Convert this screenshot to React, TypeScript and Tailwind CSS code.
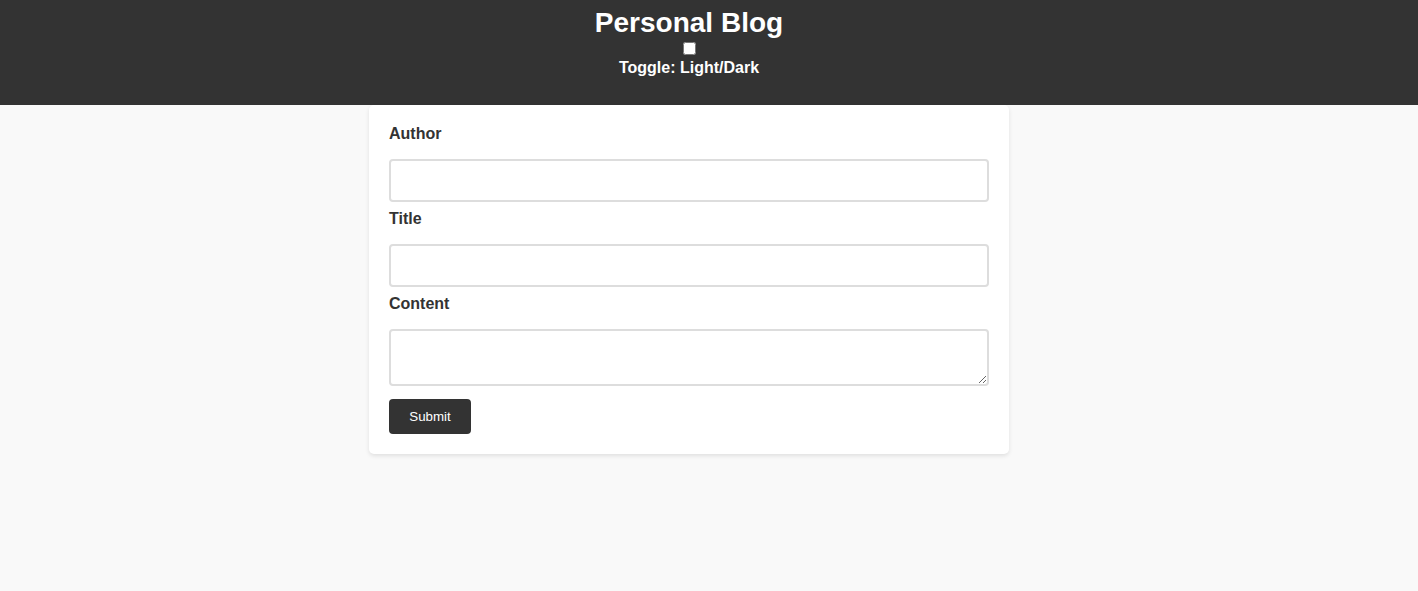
export default function App() {
  return (
    <div className="min-h-[591px] bg-[#f9f9f9] font-['Liberation_Sans',Arial,sans-serif] text-[#333]">
      {/* Header */}
      <header className="h-[105px] bg-[#333] pr-10 pt-[7px] text-white">
        <div className="flex flex-col items-center">
          <h1 className="h-[32px] text-[28px] leading-[32px] font-bold">Personal Blog</h1>
          <input type="checkbox" className="mt-[3px] h-[13px] w-[13px]" />
          <label className="mt-[4px] text-[16px] leading-[18px] font-bold">Toggle: Light/Dark</label>
        </div>
      </header>

      {/* Form card */}
      <main className="flex justify-center pr-10">
        <form className="w-[640px] rounded-[5px] bg-white p-5 shadow-[0_2px_4px_rgba(0,0,0,0.1)]">
          <label className="mb-4 block h-[18px] text-[16px] leading-[18px] font-bold">Author</label>
          <input type="text" className="mb-2 block h-[43px] w-full rounded-[4px] border-2 border-[#ddd] px-2.5 text-[16px] outline-none" />

          <label className="mb-4 block h-[18px] text-[16px] leading-[18px] font-bold">Title</label>
          <input type="text" className="mb-2 block h-[43px] w-full rounded-[4px] border-2 border-[#ddd] px-2.5 text-[16px] outline-none" />

          <label className="mb-4 block h-[18px] text-[16px] leading-[18px] font-bold">Content</label>
          <textarea className="mb-[13px] block h-[57px] w-full rounded-[4px] border-2 border-[#ddd] p-2.5 text-[16px] outline-none" />

          <button type="button" className="h-[35px] w-[82px] rounded-[4px] bg-[#333] text-[13.33px] text-white">
            Submit
          </button>
        </form>
      </main>
    </div>
  );
}
